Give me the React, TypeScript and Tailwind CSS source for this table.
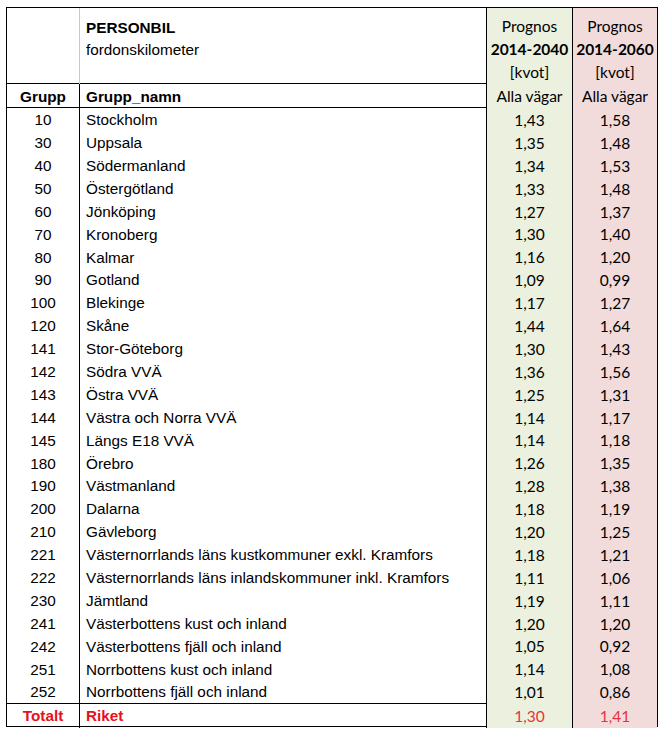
import React from 'react';

type Row = { grupp: number; namn: string; p2040: string; p2060: string };

const rows: Row[] = [
  { grupp: 10, namn: 'Stockholm', p2040: '1,43', p2060: '1,58' },
  { grupp: 30, namn: 'Uppsala', p2040: '1,35', p2060: '1,48' },
  { grupp: 40, namn: 'Södermanland', p2040: '1,34', p2060: '1,53' },
  { grupp: 50, namn: 'Östergötland', p2040: '1,33', p2060: '1,48' },
  { grupp: 60, namn: 'Jönköping', p2040: '1,27', p2060: '1,37' },
  { grupp: 70, namn: 'Kronoberg', p2040: '1,30', p2060: '1,40' },
  { grupp: 80, namn: 'Kalmar', p2040: '1,16', p2060: '1,20' },
  { grupp: 90, namn: 'Gotland', p2040: '1,09', p2060: '0,99' },
  { grupp: 100, namn: 'Blekinge', p2040: '1,17', p2060: '1,27' },
  { grupp: 120, namn: 'Skåne', p2040: '1,44', p2060: '1,64' },
  { grupp: 141, namn: 'Stor-Göteborg', p2040: '1,30', p2060: '1,43' },
  { grupp: 142, namn: 'Södra VVÄ', p2040: '1,36', p2060: '1,56' },
  { grupp: 143, namn: 'Östra VVÄ', p2040: '1,25', p2060: '1,31' },
  { grupp: 144, namn: 'Västra och Norra VVÄ', p2040: '1,14', p2060: '1,17' },
  { grupp: 145, namn: 'Längs E18 VVÄ', p2040: '1,14', p2060: '1,18' },
  { grupp: 180, namn: 'Örebro', p2040: '1,26', p2060: '1,35' },
  { grupp: 190, namn: 'Västmanland', p2040: '1,28', p2060: '1,38' },
  { grupp: 200, namn: 'Dalarna', p2040: '1,18', p2060: '1,19' },
  { grupp: 210, namn: 'Gävleborg', p2040: '1,20', p2060: '1,25' },
  { grupp: 221, namn: 'Västernorrlands läns kustkommuner exkl. Kramfors', p2040: '1,18', p2060: '1,21' },
  { grupp: 222, namn: 'Västernorrlands läns inlandskommuner inkl. Kramfors', p2040: '1,11', p2060: '1,06' },
  { grupp: 230, namn: 'Jämtland', p2040: '1,19', p2060: '1,11' },
  { grupp: 241, namn: 'Västerbottens kust och inland', p2040: '1,20', p2060: '1,20' },
  { grupp: 242, namn: 'Västerbottens fjäll och inland', p2040: '1,05', p2060: '0,92' },
  { grupp: 251, namn: 'Norrbottens kust och inland', p2040: '1,14', p2060: '1,08' },
  { grupp: 252, namn: 'Norrbottens fjäll och inland', p2040: '1,01', p2060: '0,86' },
];

const arial = "font-['Liberation_Sans',Arial,sans-serif] text-[15.3px]";
const calibri = "font-['Lato','Open_Sans',sans-serif] text-[15.5px]";

export default function App() {
  return (
    <div className="min-h-[736px] w-[671px] bg-white pt-[7px] pl-[6px] text-black">
      <div className="w-[652px] border border-black">
        {/* Header block */}
        <div className="grid h-[75px] grid-cols-[73px_406px_86px_85px]">
          <div className="border-r border-[#c8c8c8]" />
          <div className={`${arial} pl-[6px] pt-[9px] leading-[22px]`}>
            <div className="font-bold">PERSONBIL</div>
            <div>fordonskilometer</div>
          </div>
          <div className={`${calibri} border-l border-black bg-[#ebf1de] pt-[7px] text-center leading-[23px]`}>
            <div>Prognos</div>
            <div className="font-bold">2014-2040</div>
            <div>[kvot]</div>
          </div>
          <div className={`${calibri} border-l border-black bg-[#f2dcdb] pt-[7px] text-center leading-[23px]`}>
            <div>Prognos</div>
            <div className="font-bold">2014-2060</div>
            <div>[kvot]</div>
          </div>
        </div>

        {/* Column header row */}
        <div className="grid h-[25px] grid-cols-[73px_406px_86px_85px] border-y border-black">
          <div className={`${arial} flex items-center justify-center border-r border-black pt-[2px] font-bold`}>Grupp</div>
          <div className={`${arial} flex items-center pl-[6px] pt-[2px] font-bold`}>Grupp_namn</div>
          <div className={`${calibri} flex items-center justify-center border-l border-black bg-[#ebf1de]`}>Alla vägar</div>
          <div className={`${calibri} flex items-center justify-center border-l border-black bg-[#f2dcdb]`}>Alla vägar</div>
        </div>

        {/* Data rows */}
        <div>
          {rows.map((r) => (
            <div key={r.grupp} className="grid h-[22.9px] grid-cols-[73px_406px_86px_85px]">
              <div className={`${arial} flex items-center justify-center border-r border-black pt-[1px]`}>{r.grupp}</div>
              <div className={`${arial} flex items-center whitespace-nowrap pl-[6px] pt-[1px]`}>{r.namn}</div>
              <div className={`${calibri} flex items-center justify-center border-l border-black bg-[#ebf1de] pt-[1px]`}>{r.p2040}</div>
              <div className={`${calibri} flex items-center justify-center border-l border-black bg-[#f2dcdb] pt-[1px]`}>{r.p2060}</div>
            </div>
          ))}
        </div>

        {/* Total row */}
        <div className="grid h-[23px] grid-cols-[73px_406px_86px_85px] border-t border-black">
          <div className={`${arial} flex items-center justify-center border-r border-black pt-[1px] font-bold text-[#e8101c]`}>Totalt</div>
          <div className={`${arial} flex items-center pl-[6px] pt-[1px] font-bold text-[#e8101c]`}>Riket</div>
          <div className={`${calibri} flex items-center justify-center border-l border-black bg-[#ebf1de] pt-[1px] text-[#e8323c]`}>1,30</div>
          <div className={`${calibri} flex items-center justify-center border-l border-black bg-[#f2dcdb] pt-[1px] text-[#e8323c]`}>1,41</div>
        </div>
      </div>
    </div>
  );
}
